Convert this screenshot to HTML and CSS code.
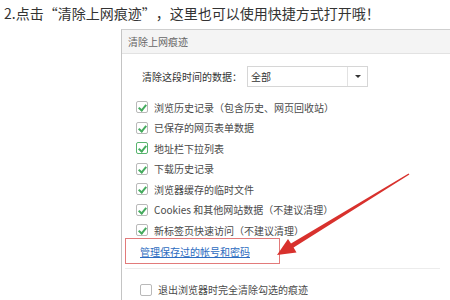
FILE: index.html
```html
<!DOCTYPE html>
<html lang="zh-CN">
<head>
    <meta charset="UTF-8">
    <title>清除上网痕迹</title>
    <link rel="stylesheet" href="styles.css">
</head>
<body>
    <p class="step">2.点击<span class="q-open">“</span>清除上网痕迹<span class="q-close">”</span>，这里也可以使用快捷方式打开哦！</p>

    <div class="dialog">
        <div class="dialog-title">清除上网痕迹</div>
        <div class="dialog-body">
            <div class="range-row">
                <span class="range-label">清除这段时间的数据：</span>
                <div class="select">
                    <span class="select-value">全部</span>
                    <span class="select-arrow"></span>
                </div>
            </div>

            <ul class="options">
                <li><span class="check on"></span>浏览历史记录（包含历史、网页回收站）</li>
                <li><span class="check on"></span>已保存的网页表单数据</li>
                <li><span class="check on focus"></span>地址栏下拉列表</li>
                <li><span class="check on"></span>下载历史记录</li>
                <li><span class="check on"></span>浏览器缓存的临时文件</li>
                <li><span class="check on"></span>Cookies 和其他网站数据（不建议清理）</li>
                <li><span class="check on"></span>新标签页快速访问（不建议清理）</li>
            </ul>

            <div class="manage-box">
                <a href="#" class="manage-link">管理保存过的帐号和密码</a>
            </div>

            <div class="divider"></div>

            <div class="exit-row"><span class="check"></span>退出浏览器时完全清除勾选的痕迹</div>
        </div>
    </div>

    <!-- red annotation arrow -->
    <svg class="arrow" width="450" height="300" viewBox="0 0 450 300">
        <polygon points="408.6,173.5 291,243.6 288,239 277,255 296.5,252.4 293.6,247.6 409.4,174.5" fill="#d8312d"/>
    </svg>
</body>
</html>
```

FILE: styles.css
```css
* {
    margin: 0;
    padding: 0;
    box-sizing: border-box;
}

body {
    width: 450px;
    height: 300px;
    overflow: hidden;
    position: relative;
    background-color: #fff;
    font-family: "Noto Sans CJK SC", "Noto Sans", sans-serif;
}

.step {
    height: 29px;
    padding-left: 4px;
    line-height: 26px;
    font-size: 14px;
    color: #333;
    white-space: nowrap;
}

/* quotes in the screenshot sit in full-width boxes */
.q-open,
.q-close {
    display: inline-block;
    width: 14px;
}

.q-open {
    text-align: right;
}

.q-close {
    text-align: center;
}

.dialog {
    margin-left: 121px;
    height: 271px;
    border-top: 1px solid #cfcfcf;
    border-left: 1px solid #c4c4c4;
    background-color: #fff;
}

.dialog-title {
    height: 24px;
    line-height: 23px;
    padding-left: 6px;
    font-size: 10px;
    color: #666;
    background-color: #f4f4f4;
    border-bottom: 1px solid #e2e2e2;
}

.dialog-body {
    padding-top: 12px;
    font-size: 10px;
    color: #4a4a4a;
}

.range-row {
    display: flex;
    align-items: center;
    padding-left: 20px;
    height: 21px;
}

.range-label {
    width: 105px;
    color: #333;
}

.select {
    display: flex;
    width: 121px;
    height: 21px;
    border: 1px solid #d6d6d6;
}

.select-value {
    flex: 1;
    padding-left: 3px;
    line-height: 19px;
    color: #333;
}

.select-arrow {
    width: 20px;
    border-left: 1px solid #e2e2e2;
    position: relative;
}

.select-arrow::after {
    content: "";
    position: absolute;
    left: 7px;
    top: 8px;
    border-left: 3px solid transparent;
    border-right: 3px solid transparent;
    border-top: 3px solid #333;
}

.options {
    list-style: none;
    margin-top: 10px;
    padding-left: 14px;
}

.options li,
.exit-row {
    display: flex;
    align-items: center;
    height: 20.5px;
    white-space: nowrap;
}

.check {
    width: 12px;
    height: 12px;
    margin-right: 6px;
    border: 1px solid #b9b9b9;
    border-radius: 2px;
    background-color: #fff;
    position: relative;
}

.check.on::after {
    content: "";
    position: absolute;
    left: 3px;
    top: 1px;
    width: 3px;
    height: 6px;
    border-right: 2px solid #45ab5e;
    border-bottom: 2px solid #45ab5e;
    transform: rotate(40deg);
}

.check.focus {
    border-color: #58b46e;
}

.manage-box {
    width: 155px;
    height: 26px;
    margin-top: -3px;
    margin-left: 3px;
    padding-left: 14px;
    border: 1px solid #e27a7a;
    line-height: 26px;
}

.manage-link {
    color: #2d6cc0;
    text-decoration: underline;
}

.divider {
    height: 1px;
    margin: 4px 10px 11px 3px;
    background-color: #ececec;
}

.exit-row {
    padding-left: 18px;
}

.arrow {
    position: absolute;
    left: 0;
    top: 0;
}
```
